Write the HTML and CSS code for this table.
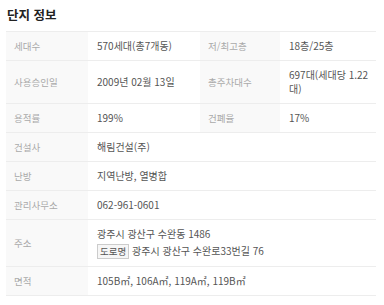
FILE: index.html
```html
<!DOCTYPE html>
<html lang="ko">
<head>
<meta charset="utf-8">
<link rel="stylesheet" href="styles.css">
</head>
<body>
<section class="info">
  <h2 class="title">단지 정보</h2>
  <table class="tbl">
    <colgroup>
      <col class="c-l1"><col class="c-v1"><col class="c-l2"><col class="c-v2">
    </colgroup>
    <tr><th>세대수</th><td>570세대(총7개동)</td><th>저/최고층</th><td>18층/25층</td></tr>
    <tr><th>사용승인일</th><td>2009년 02월 13일</td><th>총주차대수</th><td class="wrap">697대(세대당 1.22대)</td></tr>
    <tr><th>용적률</th><td>199%</td><th>건폐율</th><td>17%</td></tr>
    <tr><th>건설사</th><td colspan="3">해림건설(주)</td></tr>
    <tr><th>난방</th><td colspan="3">지역난방, 열병합</td></tr>
    <tr><th>관리사무소</th><td colspan="3">062-961-0601</td></tr>
    <tr class="addr"><th>주소</th><td colspan="3"><div>광주시 광산구 수완동 1486</div><div class="road"><span class="badge">도로명</span> 광주시 광산구 수완로33번길 76</div></td></tr>
    <tr><th>면적</th><td colspan="3">105B㎡, 106A㎡, 119A㎡, 119B㎡</td></tr>
  </table>
</section>
</body>
</html>
```
FILE: styles.css
```css
html, body { margin: 0; padding: 0; background: #fff; }
body { font-family: "Noto Sans CJK KR", "Noto Sans", sans-serif; color: #555; }
.info { padding: 7px 8px 0 6px; }
.title { margin: 0 0 0 1px; font-size: 12.5px; line-height: 16px; font-weight: 700; color: #222; height: 24px; }
.tbl { width: 370px; border-collapse: collapse; table-layout: fixed; border-top: 1px solid #ededed; }
.c-l1 { width: 82px; }
.c-v1 { width: 112px; }
.c-l2 { width: 80px; }
.c-v2 { width: 96px; }
.tbl th, .tbl td { border-bottom: 1px solid #ededed; padding: 7px 8px; line-height: 14px; vertical-align: middle; text-align: left; }
.tbl th { background: #f9f9f9; color: #aaa; font-weight: 400; font-size: 9.5px; }
.tbl td { color: #555; font-size: 10px; padding-left: 9px; padding-right: 4px; }
.tbl td.wrap { word-break: break-all; padding-right: 2px; }
.road { margin-top: 3px; }
.badge { display: inline-block; border: 1px solid #ccc; background: #f6f6f6; font-size: 9.5px; line-height: 13px; padding: 0 2px; color: #555; }
```
